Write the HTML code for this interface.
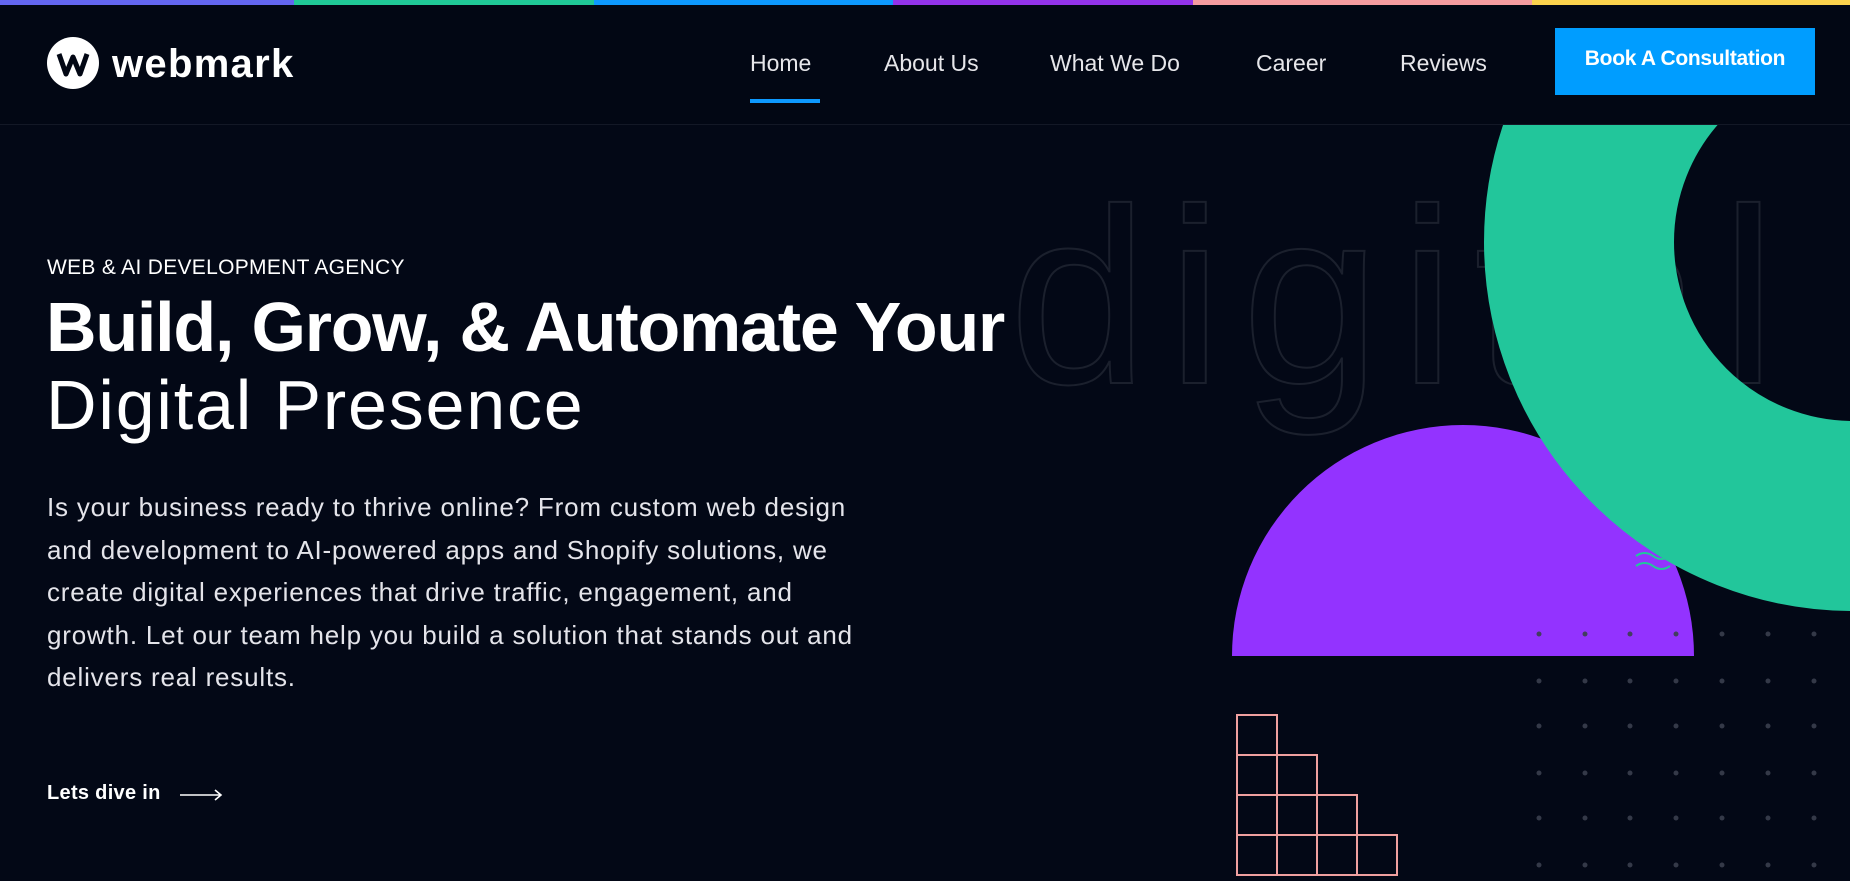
<!DOCTYPE html>
<html><head><meta charset="utf-8"><style>
*{margin:0;padding:0;box-sizing:border-box}
html,body{width:1850px;height:881px;overflow:hidden}
body{background:#030816;font-family:"Liberation Sans",sans-serif;color:#fff;position:relative}
.strip{position:absolute;top:0;height:5px;z-index:10}
header{position:absolute;top:5px;left:0;width:1850px;height:120px;background:#020714;border-bottom:1px solid #131826;z-index:5}
.nav a{position:absolute;top:45px;font-size:23px;color:#e6e6ea;text-decoration:none}
.abs{position:absolute}
</style></head><body>
<div class="strip" style="left:0;width:294px;background:#6366f1"></div>
<div class="strip" style="left:294px;width:300px;background:#20c997"></div>
<div class="strip" style="left:594px;width:299px;background:#0d99ff"></div>
<div class="strip" style="left:893px;width:300px;background:#9333ea"></div>
<div class="strip" style="left:1193px;width:339px;background:#f59ca0"></div>
<div class="strip" style="left:1532px;width:318px;background:#fcd34d"></div>

<svg class="abs" style="left:0;top:0;z-index:1" width="1850" height="881">
 <text x="1009" y="383" font-family="Liberation Sans" font-size="250" font-weight="400" fill="none" stroke="#1b202d" stroke-width="2" letter-spacing="19">digital</text>
 <path d="M1232 656 A231 231 0 0 1 1694 656 Z" fill="#9333ff"/>
 <circle cx="1853" cy="242" r="274" fill="none" stroke="#22c69b" stroke-width="190"/>
 <path d="M1636 556 q8.5 -6 17 0 t17 0 M1636 566 q8.5 -6 17 0 t17 0" stroke="#22c69b" stroke-width="2" fill="none"/>
 <g fill="none" stroke="#f0a0a0" stroke-width="2">
  <rect x="1237" y="715" width="40" height="40"/>
  <rect x="1237" y="755" width="40" height="40"/><rect x="1277" y="755" width="40" height="40"/>
  <rect x="1237" y="795" width="40" height="40"/><rect x="1277" y="795" width="40" height="40"/><rect x="1317" y="795" width="40" height="40"/>
  <rect x="1237" y="835" width="40" height="40"/><rect x="1277" y="835" width="40" height="40"/><rect x="1317" y="835" width="40" height="40"/><rect x="1357" y="835" width="40" height="40"/>
 </g>
 <g fill="#3a3f4e" fill-opacity="0.9">
  <circle cx="1539" cy="634" r="2.5"/><circle cx="1585" cy="634" r="2.5"/><circle cx="1630" cy="634" r="2.5"/><circle cx="1676" cy="634" r="2.5"/><circle cx="1722" cy="634" r="2.5"/><circle cx="1768" cy="634" r="2.5"/><circle cx="1814" cy="634" r="2.5"/>
  <circle cx="1539" cy="681" r="2.5"/><circle cx="1585" cy="681" r="2.5"/><circle cx="1630" cy="681" r="2.5"/><circle cx="1676" cy="681" r="2.5"/><circle cx="1722" cy="681" r="2.5"/><circle cx="1768" cy="681" r="2.5"/><circle cx="1814" cy="681" r="2.5"/>
  <circle cx="1539" cy="726" r="2.5"/><circle cx="1585" cy="726" r="2.5"/><circle cx="1630" cy="726" r="2.5"/><circle cx="1676" cy="726" r="2.5"/><circle cx="1722" cy="726" r="2.5"/><circle cx="1768" cy="726" r="2.5"/><circle cx="1814" cy="726" r="2.5"/>
  <circle cx="1539" cy="773" r="2.5"/><circle cx="1585" cy="773" r="2.5"/><circle cx="1630" cy="773" r="2.5"/><circle cx="1676" cy="773" r="2.5"/><circle cx="1722" cy="773" r="2.5"/><circle cx="1768" cy="773" r="2.5"/><circle cx="1814" cy="773" r="2.5"/>
  <circle cx="1539" cy="818" r="2.5"/><circle cx="1585" cy="818" r="2.5"/><circle cx="1630" cy="818" r="2.5"/><circle cx="1676" cy="818" r="2.5"/><circle cx="1722" cy="818" r="2.5"/><circle cx="1768" cy="818" r="2.5"/><circle cx="1814" cy="818" r="2.5"/>
  <circle cx="1539" cy="865" r="2.5"/><circle cx="1585" cy="865" r="2.5"/><circle cx="1630" cy="865" r="2.5"/><circle cx="1676" cy="865" r="2.5"/><circle cx="1722" cy="865" r="2.5"/><circle cx="1768" cy="865" r="2.5"/><circle cx="1814" cy="865" r="2.5"/>
 </g>
</svg>

<header>
 <svg class="abs" style="left:47px;top:32px" width="52" height="52" viewBox="0 0 52 52">
  <circle cx="26" cy="26" r="26" fill="#fff"/>
  <path d="M12 17 L19 37 L26 20 L33 37 L40 17" fill="none" stroke="#020714" stroke-width="5" stroke-linejoin="round"/>
 </svg>
 <div class="abs" style="left:112px;top:37px;font-size:40px;font-weight:700;letter-spacing:1.3px">webmark</div>
 <div class="nav">
  <a style="left:750px">Home</a>
  <a style="left:884px">About Us</a>
  <a style="left:1050px">What We Do</a>
  <a style="left:1256px">Career</a>
  <a style="left:1400px">Reviews</a>
 </div>
 <div class="abs" style="left:750px;top:94px;width:70px;height:4px;background:#0d99ff"></div>
 <div class="abs" style="left:1555px;top:23px;width:260px;height:67px;background:#009dff;font-size:21px;font-weight:700;text-align:center;line-height:62px;letter-spacing:-0.3px">Book A Consultation</div>
</header>

<div class="abs" style="z-index:3;left:47px;top:256px;font-size:21px;letter-spacing:0.3px">WEB &amp; AI DEVELOPMENT AGENCY</div>
<div class="abs" style="z-index:3;left:46px;top:288px;font-size:70px;line-height:78px;white-space:nowrap">
 <div style="font-weight:700;letter-spacing:-1.2px">Build, Grow, &amp; Automate Your</div>
 <div style="letter-spacing:1.8px">Digital Presence</div>
</div>
<div class="abs" style="z-index:3;left:47px;top:486px;width:900px;font-size:26px;letter-spacing:0.8px;line-height:42.5px;color:#e4e4ea">Is your business ready to thrive online? From custom web design<br>and development to AI-powered apps and Shopify solutions, we<br>create digital experiences that drive traffic, engagement, and<br>growth. Let our team help you build a solution that stands out and<br>delivers real results.</div>
<div class="abs" style="z-index:3;left:47px;top:782px;font-size:20px;font-weight:700;letter-spacing:0.3px">Lets dive in</div>
<svg class="abs" style="z-index:3;left:180px;top:789px" width="44" height="12"><path d="M0 6 H41 M35 1 L41 6 L35 11" stroke="#fff" stroke-width="1.6" fill="none"/></svg>
</body></html>
